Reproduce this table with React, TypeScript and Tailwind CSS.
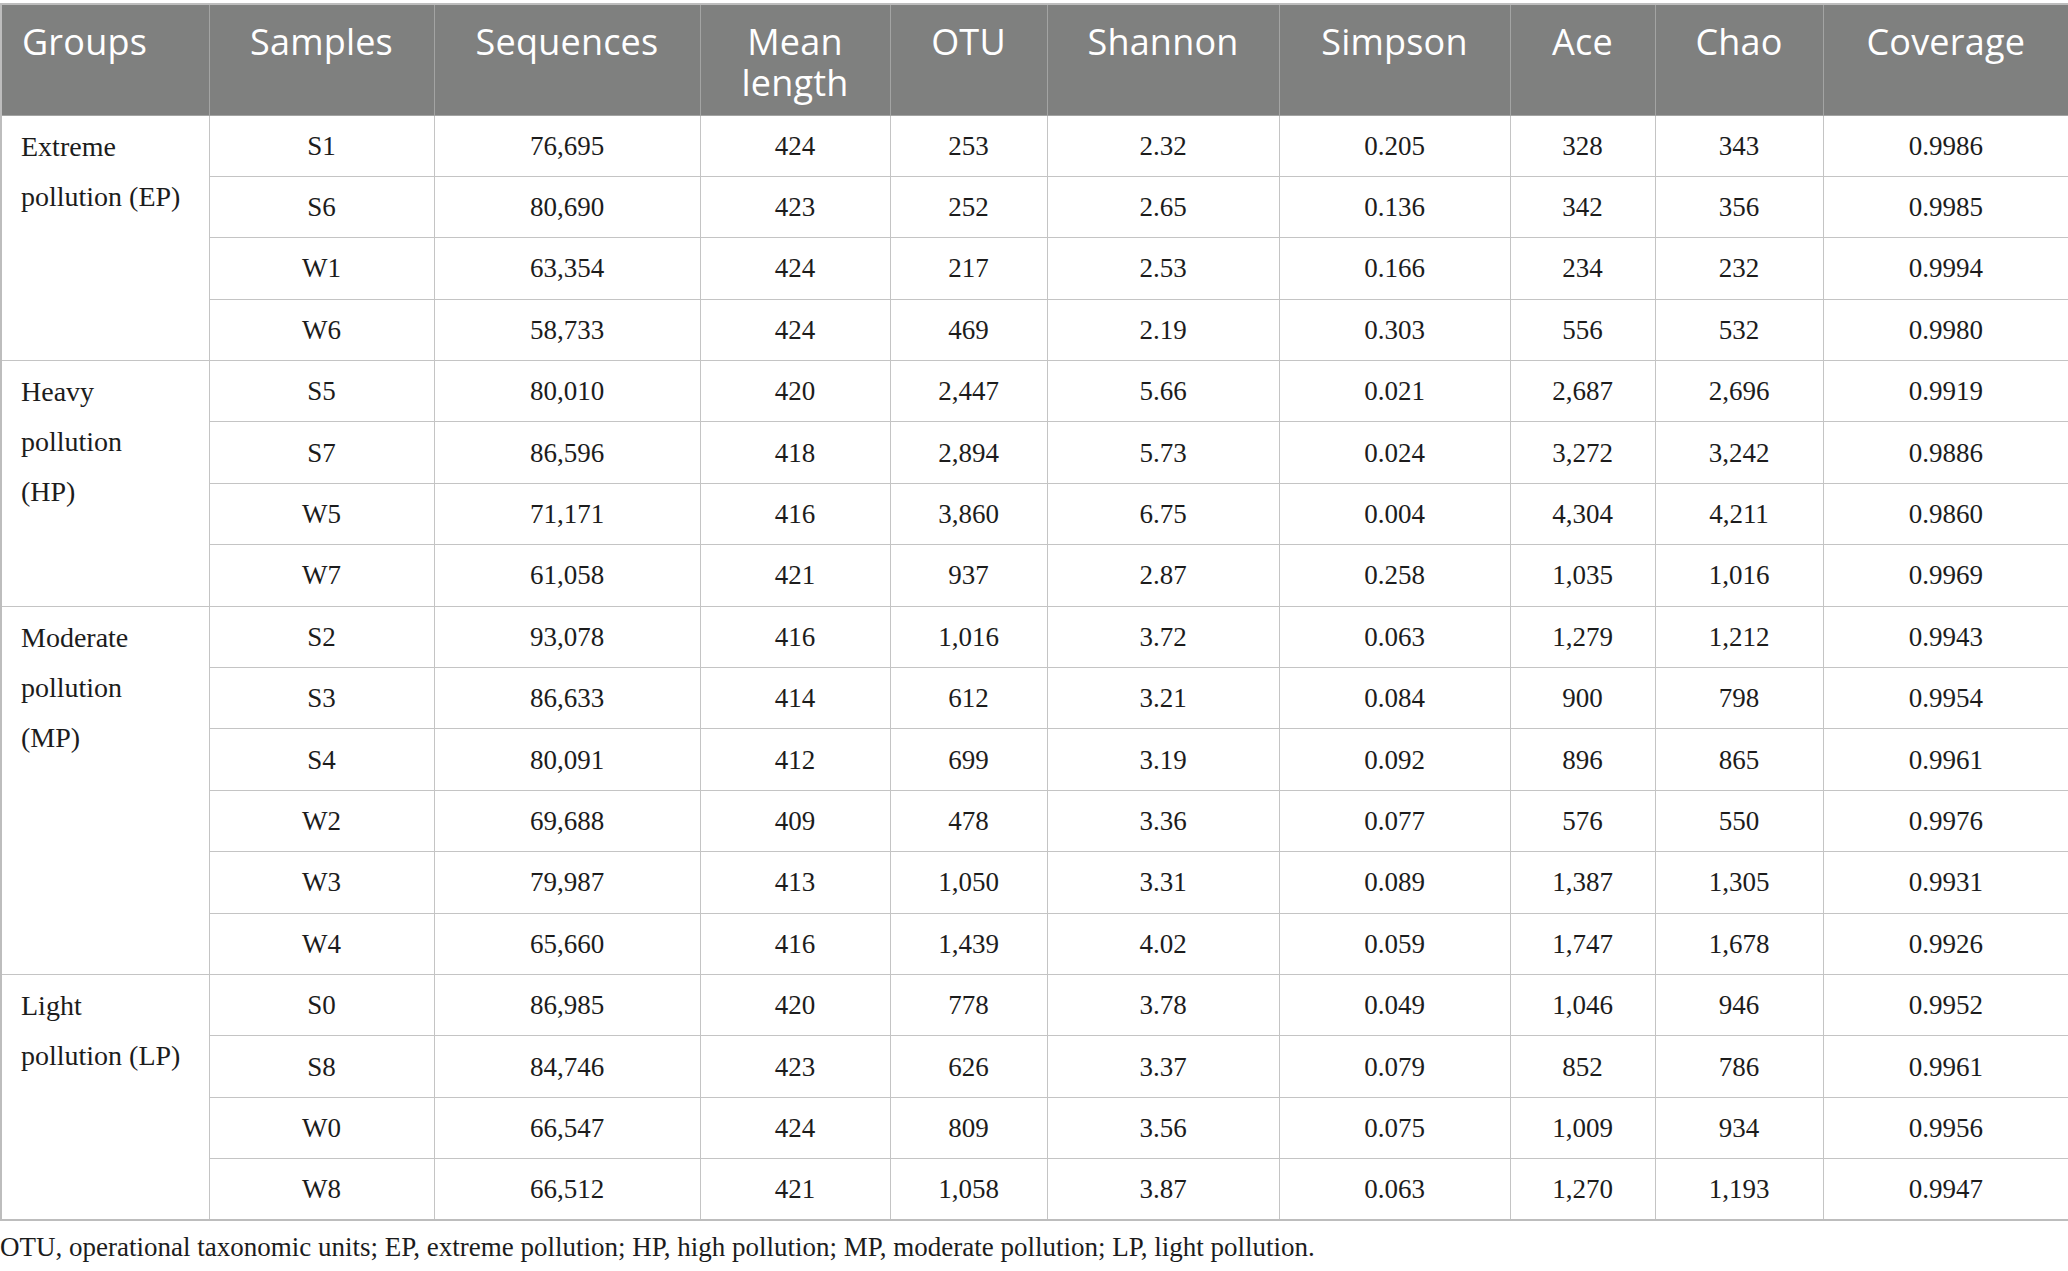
const headers = [
  "Groups",
  "Samples",
  "Sequences",
  "Mean length",
  "OTU",
  "Shannon",
  "Simpson",
  "Ace",
  "Chao",
  "Coverage",
];

const widths = [
  "w-[208px]",
  "w-[225px]",
  "w-[266px]",
  "w-[190px]",
  "w-[157px]",
  "w-[232px]",
  "w-[231px]",
  "w-[145px]",
  "w-[168px]",
  "w-[246px]",
];

// group labels are broken where the printed table breaks them
const groups = [
  {
    name: ["Extreme", "pollution (EP)"],
    rows: [
      ["S1", "76,695", "424", "253", "2.32", "0.205", "328", "343", "0.9986"],
      ["S6", "80,690", "423", "252", "2.65", "0.136", "342", "356", "0.9985"],
      ["W1", "63,354", "424", "217", "2.53", "0.166", "234", "232", "0.9994"],
      ["W6", "58,733", "424", "469", "2.19", "0.303", "556", "532", "0.9980"],
    ],
  },
  {
    name: ["Heavy", "pollution", "(HP)"],
    rows: [
      ["S5", "80,010", "420", "2,447", "5.66", "0.021", "2,687", "2,696", "0.9919"],
      ["S7", "86,596", "418", "2,894", "5.73", "0.024", "3,272", "3,242", "0.9886"],
      ["W5", "71,171", "416", "3,860", "6.75", "0.004", "4,304", "4,211", "0.9860"],
      ["W7", "61,058", "421", "937", "2.87", "0.258", "1,035", "1,016", "0.9969"],
    ],
  },
  {
    name: ["Moderate", "pollution", "(MP)"],
    rows: [
      ["S2", "93,078", "416", "1,016", "3.72", "0.063", "1,279", "1,212", "0.9943"],
      ["S3", "86,633", "414", "612", "3.21", "0.084", "900", "798", "0.9954"],
      ["S4", "80,091", "412", "699", "3.19", "0.092", "896", "865", "0.9961"],
      ["W2", "69,688", "409", "478", "3.36", "0.077", "576", "550", "0.9976"],
      ["W3", "79,987", "413", "1,050", "3.31", "0.089", "1,387", "1,305", "0.9931"],
      ["W4", "65,660", "416", "1,439", "4.02", "0.059", "1,747", "1,678", "0.9926"],
    ],
  },
  {
    name: ["Light", "pollution (LP)"],
    rows: [
      ["S0", "86,985", "420", "778", "3.78", "0.049", "1,046", "946", "0.9952"],
      ["S8", "84,746", "423", "626", "3.37", "0.079", "852", "786", "0.9961"],
      ["W0", "66,547", "424", "809", "3.56", "0.075", "1,009", "934", "0.9956"],
      ["W8", "66,512", "421", "1,058", "3.87", "0.063", "1,270", "1,193", "0.9947"],
    ],
  },
];

const App = () => {
  return (
    <div className="w-[2068px] min-h-[1271px] bg-white pt-[3px]">
      <table className="w-[2068px] table-fixed border-collapse border-2 border-[#bdbdbd] font-['Liberation_Serif',serif] text-[27px] text-[#1c1c1c]">
        <colgroup>
          {widths.map((w, i) => (
            <col key={i} className={w} />
          ))}
        </colgroup>
        <thead>
          <tr className="h-[111px] bg-[#7f807f]">
            {headers.map((h, i) => (
              <th
                key={h}
                className={
                  "align-top pt-[16px] border border-[#a3a4a3] font-['Open_Sans',sans-serif] font-normal text-[36px] tracking-[0.2px] leading-[41px] text-white " +
                  (i === 0 ? "text-left pl-[20px]" : "text-center px-[24px]")
                }
              >
                {h}
              </th>
            ))}
          </tr>
        </thead>
        <tbody>
          {groups.map((g) =>
            g.rows.map((r, ri) => (
              <tr key={g.name[0] + r[0]} className="h-[61.4px]">
                {ri === 0 && (
                  <td
                    rowSpan={g.rows.length}
                    className="align-top text-left pl-[19px] pr-[4px] pt-[6px] text-[28px] leading-[50px] border border-[#c4c4c4] whitespace-nowrap"
                  >
                    {g.name.map((line) => (
                      <div key={line}>{line}</div>
                    ))}
                  </td>
                )}
                {r.map((c, ci) => (
                  <td
                    key={ci}
                    className="text-center align-middle border border-[#c4c4c4] leading-[30px]"
                  >
                    {c}
                  </td>
                ))}
              </tr>
            ))
          )}
        </tbody>
      </table>
      <p className="mt-[9px] font-['Liberation_Serif',serif] text-[27px] leading-[34px] text-[#1c1c1c]">
        OTU, operational taxonomic units; EP, extreme pollution; HP, high
        pollution; MP, moderate pollution; LP, light pollution.
      </p>
    </div>
  );
};

export default App;
